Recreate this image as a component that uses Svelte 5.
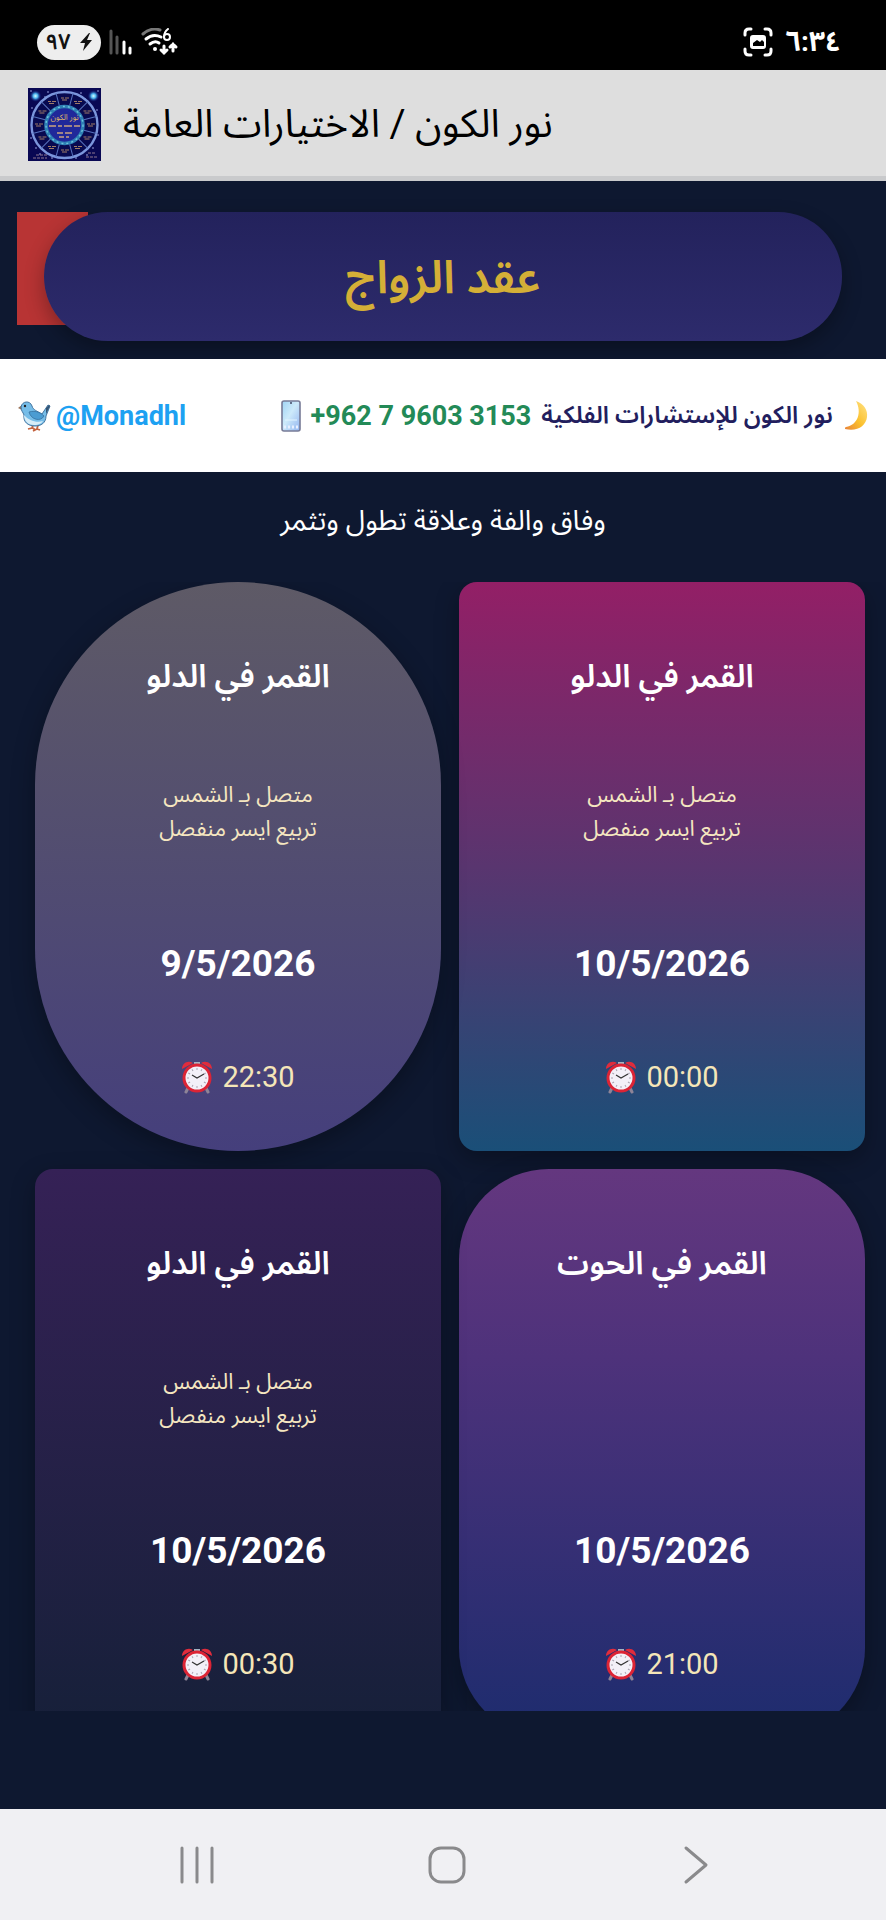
<script>

    // Cards of the list, in reading order (right to left)
    const cards = [
        { shape: "rect", theme: "rose", title: "القمر في الدلو", notes: ["متصل بـ الشمس", "تربيع ايسر منفصل"], date: "10/5/2026", time: "00:00" },
        { shape: "oval", theme: "slate", title: "القمر في الدلو", notes: ["متصل بـ الشمس", "تربيع ايسر منفصل"], date: "9/5/2026", time: "22:30" },
        { shape: "round", theme: "violet", title: "القمر في الحوت", notes: [], date: "10/5/2026", time: "21:00" },
        { shape: "rect", theme: "night", title: "القمر في الدلو", notes: ["متصل بـ الشمس", "تربيع ايسر منفصل"], date: "10/5/2026", time: "00:30" }
    ];

    // Twelve houses of the wheel in the logo
    const houses = Array.from({ length: 12 }, (_, i) => i * 30 + 15);

    // Small stars of the logo
    const stars = [[3, 3], [20, 4], [53, 5], [70, 3], [4, 20], [69, 22], [3, 50], [70, 47], [8, 60], [65, 60], [12, 66], [59, 67], [24, 70], [48, 70], [17, 9], [57, 11]];

    // Ticks of the alarm clock
    const ticks = Array.from({ length: 12 }, (_, i) => i * 30);

</script>

<div class="page">

    <!-- Status bar -->
    <div class="status">

        <div class="status-group">

            <!-- Battery -->
            <span class="battery">
                ٩٧
                <svg width="14" height="20" viewBox="0 0 14 20"><path d="M10 1 1 11h5l-2 8L13 8H8l3-7z" fill="#111" /></svg>
            </span>

            <!-- Signal -->
            <svg width="24" height="26" viewBox="0 0 24 26" stroke-width="3" stroke-linecap="round">
                <path d="M2 2v22M8 8v16" stroke="#555" />
                <path d="M15 13v11M21 19v5" stroke="#fff" />
            </svg>

            <!-- Wifi -->
            <svg width="38" height="28" viewBox="0 0 38 28" fill="none" stroke="#fff" stroke-width="3" stroke-linecap="round">
                <path d="M2 6Q10-1 19 2" stroke="#777" />
                <path d="M5 11Q12 5 20 9" />
                <path d="M9 16Q14 12 18 15" />
                <circle cx="14" cy="21" r="2" fill="#fff" stroke="none" />
                <path d="M27 1Q23 4 23 9" stroke-width="2" />
                <circle cx="26" cy="9" r="3" stroke-width="2" />
                <path d="M23 18v7M20 22l3 3 3-3M32 23v-7M29 19l3-3 3 3" />
            </svg>

        </div>

        <div class="status-group">

            <!-- Screen capture -->
            <svg width="30" height="30" viewBox="0 0 30 30" fill="none" stroke="#fff" stroke-width="3" stroke-linecap="round">
                <path d="M2 8V6q0-4 4-4h2M22 2h2q4 0 4 4v2M28 22v2q0 4-4 4h-2M8 28H6q-4 0-4-4v-2" />
                <rect x="8" y="9" width="14" height="12" rx="2" fill="#fff" stroke-width="2" />
                <path d="M10 19v-3l4-3 3 2 2-2 2 2v4z" fill="#000" stroke="none" />
            </svg>

            <span class="clock">٦:٣٤</span>

        </div>

    </div>

    <!-- App bar -->
    <header class="app-bar">

        <!-- Logo -->
        <svg class="logo" viewBox="0 0 73 73" aria-hidden="true">
            <defs>
                <radialGradient id="glow">
                    <stop offset="0" stop-color="#d8ffff" />
                    <stop offset=".4" stop-color="#4cb4ee" />
                    <stop offset="1" stop-color="#0a0a70" stop-opacity="0" />
                </radialGradient>
            </defs>
            <rect width="73" height="73" fill="#090853" />
            {#each stars as [x, y]}
                <circle cx={x} cy={y} r=".8" fill="#a9b4f0" />
            {/each}
            <circle cx="36.5" cy="37" r="33" fill="#080a50" stroke="#7b96dc" stroke-width="2.4" />
            {#each houses as angle}
                <path d="M36.5 4V17" stroke="#5873be" stroke-width="1" transform="rotate({angle} 36.5 37)" />
                <path d="M33 10h3M37 10h4M34 12h5" stroke="#b48c6c" stroke-width=".9" transform="rotate({angle + 15} 36.5 37) rotate({-angle - 15} 36.5 11)" />
            {/each}
            <circle cx="36.5" cy="37" r="18.5" fill="#20289a" stroke="#2e7fb4" stroke-width="3.6" />
            <circle cx="36.5" cy="37" r="18.5" fill="none" stroke="#6ec4dc" stroke-width="1.4" stroke-dasharray="2 3" />
            <text x="36.5" y="32" text-anchor="middle" font-size="8" fill="#dfb46a">نور الكون</text>
            <path d="M21 38h7M30 38h4M36 38h8M46 38h6M29 45h6M37 45h7M31 49h5M38 49h3" stroke="#c9a380" stroke-width="1.4" />
            <path d="M8 67h11M5 70h14M60 65h7M58 69h12" stroke="#8f7790" stroke-width="1" stroke-dasharray="3 1" />
            <circle cx="7.5" cy="8" r="6" fill="url(#glow)" />
            <circle cx="65.5" cy="8" r="6" fill="url(#glow)" />
        </svg>

        <h1>نور الكون / الاختيارات العامة</h1>

    </header>

    <!-- Content -->
    <main dir="rtl">

        <!-- Heading -->
        <div class="heading">
            <button class="back" aria-label="رجوع"></button>
            <h2>عقد الزواج</h2>
        </div>

        <!-- Contact bar -->
        <div class="contact">

            <div class="contact-group">

                <!-- Moon -->
                <svg width="26" height="32" viewBox="0 0 26 32" aria-hidden="true">
                    <defs>
                        <linearGradient id="moon" x1="1" y1="0" x2="0" y2="1">
                            <stop offset="0" stop-color="#ffe48a" />
                            <stop offset=".55" stop-color="#fbc02d" />
                            <stop offset="1" stop-color="#e8833a" />
                        </linearGradient>
                    </defs>
                    <path d="M13 1c8 3 12 9 11 16-1 9-10 15-22 12 0-1 0-2 1-2C15 25 19 12 13 1z" fill="url(#moon)" />
                </svg>

                <span class="brand">نور الكون للإستشارات الفلكية</span>
                <a class="phone" href="tel:+962796033153" dir="ltr">+962 7 9603 3153</a>

                <!-- Phone -->
                <svg width="20" height="32" viewBox="0 0 20 32" aria-hidden="true">
                    <defs>
                        <linearGradient id="screen" x1="0" y1="0" x2="1" y2="1">
                            <stop offset="0" stop-color="#9fd4f4" />
                            <stop offset=".45" stop-color="#cdeafa" />
                            <stop offset="1" stop-color="#92b4f0" />
                        </linearGradient>
                    </defs>
                    <rect x="1" y="1" width="18" height="30" rx="2" fill="url(#screen)" stroke="#777b96" stroke-width="1.6" />
                    <path d="M10 2v2" stroke="#444a66" stroke-width="1.5" />
                    <path d="M4 20h12" stroke="#e3f5ff" />
                    <path d="M3 27h14" stroke="#e8f0ff" stroke-width="3" stroke-dasharray="2 2" />
                </svg>

            </div>

            <a class="twitter" href="https://twitter.com/Monadhl">
                <span dir="ltr">@Monadhl</span>

                <!-- Bird -->
                <svg width="34" height="32" viewBox="0 0 34 32" aria-hidden="true">
                    <path d="M16 25l-1 3-4 1M16 28l2 2M21 25l-1 4-4 2M20 29l3 1" fill="none" stroke="#c4633f" stroke-width="1.8" />
                    <path d="M1 8l4-3v5z" fill="#9a7359" />
                    <path d="M4 7C5 1 13 0 15 6c1 4 5 5 10 8l6-9 2 1-4 10c0 7-5 10-11 10-7 0-12-4-11-11-1-3-3-4-3-8z" fill="#76bde8" stroke="#43749f" stroke-width="1" />
                    <path d="M7 15c0 6 4 10 10 10 5 0 8-2 9-4-6 2-14 0-19-6z" fill="#d7edf8" />
                    <path d="M12 12c7-2 12 1 15 4-3 6-13 4-15-4z" fill="#4b9cd2" stroke="#37729f" stroke-width=".8" />
                    <path d="M29 8l3-3 1 1-4 8z" fill="#355574" />
                    <circle cx="8" cy="6" r="1.2" fill="#222" />
                </svg>
            </a>

        </div>

        <p class="intro">وفاق والفة وعلاقة تطول وتثمر</p>

        <!-- Cards -->
        <div class="list">

            {#each cards as card}

                <article class="card {card.shape} {card.theme}">

                    <h3>{card.title}</h3>

                    <p class="notes">
                        {#each card.notes as note}
                            <span>{note}</span>
                        {/each}
                    </p>

                    <p class="date">{card.date}</p>

                    <p class="time" dir="ltr">

                        <!-- Alarm clock -->
                        <svg width="32" height="34" viewBox="0 0 32 34" aria-hidden="true">
                            <path d="M7 28l-2 4M25 28l2 4" stroke="#8e8497" stroke-width="3" stroke-linecap="round" />
                            <path d="M13 2h6v4h-6z" fill="#a3b3c1" />
                            <path d="M1 9C1 3 7 0 12 3zM31 9c0-6-6-9-11-6z" fill="#e02c3c" />
                            <circle cx="16" cy="18" r="13" fill="#f3f0f8" stroke="#dc2435" stroke-width="3" />
                            {#each ticks as angle}
                                <path d="M16 8v2" stroke="#a9a4b2" transform="rotate({angle} 16 18)" />
                            {/each}
                            <path d="M11 15l5 3 7-4" fill="none" stroke="#333" stroke-width="1.2" />
                        </svg>

                        {card.time}

                    </p>

                </article>

            {/each}

        </div>

    </main>

    <!-- Navigation bar -->
    <nav>
        <button aria-label="التطبيقات الأخيرة">
            <svg width="40" height="40" viewBox="0 0 40 40"><path d="M4 3v34M19 3v34M34 3v34" /></svg>
        </button>
        <button aria-label="الشاشة الرئيسية">
            <svg width="40" height="40" viewBox="0 0 40 40"><rect x="3" y="3" width="34" height="34" rx="11" /></svg>
        </button>
        <button aria-label="رجوع">
            <svg width="40" height="40" viewBox="0 0 40 40"><path d="M10 3l20 17-20 17" /></svg>
        </button>
    </nav>

</div>

<style>

    :global(body) {
        margin: 0;
        background: #0e1830;
    }

    /* Page */
    .page {
        display: flex;
        flex-direction: column;
        height: 100vh;
        color: #fff;
        background: #0e1830;
        font-family: Roboto, "Noto Sans Arabic", "Noto Naskh Arabic", "DejaVu Sans", sans-serif;
    }

    h1, h2, h3, p {
        margin: 0;
    }

    button {
        border: 0;
        padding: 0;
        background: none;
    }

    a {
        text-decoration: none;
    }

    svg {
        flex: none;
    }

    /* Status bar */
    .status {
        display: flex;
        justify-content: space-between;
        align-items: center;
        box-sizing: border-box;
        height: 70px;
        padding: 14px 45px 0 37px;
        background: #000;
    }

    .status-group {
        display: flex;
        align-items: center;
        gap: 8px;
    }

    .battery {
        display: flex;
        align-items: center;
        justify-content: center;
        gap: 8px;
        width: 64px;
        height: 35px;
        border-radius: 18px;
        color: #111;
        background: #eee;
        font-size: 22px;
        font-weight: 600;
    }

    .clock {
        margin-left: 4px;
        font-size: 28px;
        font-weight: 700;
        line-height: 32px;
    }

    /* App bar */
    .app-bar {
        display: flex;
        align-items: center;
        gap: 22px;
        box-sizing: border-box;
        height: 111px;
        padding: 2px 28px 0;
        color: #000;
        background: #dedede;
        border-bottom: 5px solid #c9cacc;
    }

    .logo {
        width: 73px;
        height: 73px;
    }

    h1 {
        font-size: 39px;
        font-weight: 400;
    }

    /* Content */
    main {
        display: flex;
        flex: 1;
        flex-direction: column;
        min-height: 0;
        padding-bottom: 98px;
    }

    /* Heading, the pill lies over the back button */
    .heading {
        display: grid;
        padding: 31px 17px 18px;
    }

    .heading > * {
        grid-area: 1 / 1;
    }

    .back {
        justify-self: end;
        width: 71px;
        height: 113px;
        background: #b83434;
    }

    h2 {
        display: flex;
        align-items: center;
        justify-content: center;
        height: 129px;
        margin: 0 27px;
        border-radius: 64px;
        color: #d4af37;
        background: linear-gradient(#23225c, #2d2b6c);
        box-shadow: 0 8px 20px rgba(0, 0, 0, .3);
        font-size: 46px;
        font-weight: 600;
        line-height: 60px;
        z-index: 1;
    }

    /* Contact bar */
    .contact {
        display: flex;
        align-items: center;
        justify-content: space-between;
        height: 113px;
        padding: 0 17px;
        background: #fff;
        font-size: 27px;
        font-weight: 700;
        z-index: 1;
    }

    .contact-group, .twitter {
        display: flex;
        align-items: center;
        gap: 10px;
    }

    .brand {
        color: #221e5e;
        font-size: 24px;
        font-weight: 600;
    }

    .phone {
        color: #238a57;
    }

    .twitter {
        gap: 5px;
        color: #1da1f2;
    }

    /* Intro */
    .intro {
        padding: 24px 0 37px;
        text-align: center;
        font-size: 28px;
        line-height: 49px;
    }

    /* Cards */
    .list {
        display: grid;
        flex: 1;
        grid-template-columns: 1fr 1fr;
        grid-auto-rows: 569px;
        gap: 18px;
        min-height: 0;
        padding: 0 21px 0 35px;
        overflow: hidden;
    }

    .card {
        display: flex;
        flex-direction: column;
        align-items: center;
        box-sizing: border-box;
        padding: 68px 20px 0;
        box-shadow: 0 8px 24px rgba(0, 0, 0, .3);
        text-align: center;
    }

    .rect { border-radius: 18px; }
    .round { border-radius: 90px; }
    .oval { border-radius: 204px; }

    .rose { background: linear-gradient(#931f66, #59356f 50%, #1a4f78); }
    .slate { background: linear-gradient(#5e5a66, #453f7c); }
    .violet { background: linear-gradient(#64377f, #4e327b 33%, #1d2c6e); }
    .night { background: linear-gradient(#352156, #162039); }

    h3 {
        font-size: 32px;
        font-weight: 600;
        line-height: 52px;
    }

    .notes {
        display: flex;
        flex-direction: column;
        height: 68px;
        margin-top: 76px;
        color: #f5e6c0;
        font-size: 22px;
        line-height: 34px;
    }

    .date {
        margin-top: 93px;
        font-size: 37px;
        font-weight: 700;
        line-height: 50px;
    }

    .time {
        display: flex;
        align-items: center;
        gap: 9px;
        margin-top: 68px;
        color: #f5e6b8;
        font-size: 29px;
        line-height: 40px;
    }

    /* Navigation bar */
    nav {
        display: flex;
        align-items: center;
        justify-content: space-around;
        box-sizing: border-box;
        height: 111px;
        padding: 0 66px 0 74px;
        background: #f0f0f3;
    }

    nav svg {
        display: block;
        fill: none;
        stroke: #8a8a8c;
        stroke-width: 3;
        stroke-linecap: round;
        stroke-linejoin: round;
    }

</style>
